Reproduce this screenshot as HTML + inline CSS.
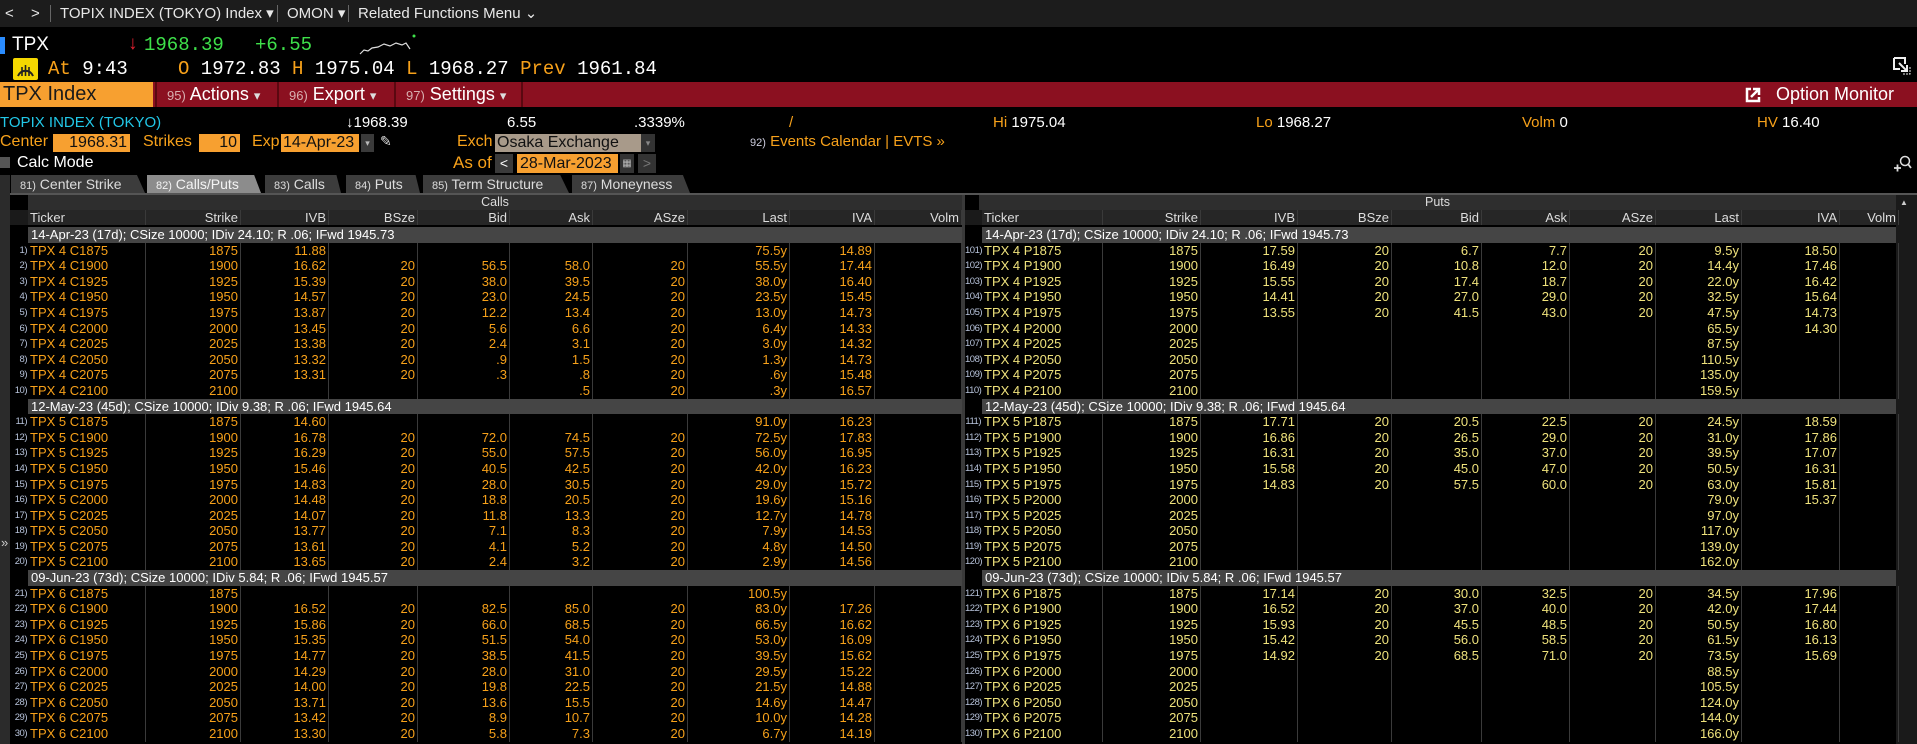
<!DOCTYPE html>
<html><head><meta charset="utf-8"><style>
*{margin:0;padding:0;box-sizing:border-box}
body{width:1917px;height:744px;background:#000;overflow:hidden;position:relative;font-family:"Liberation Sans",sans-serif;color:#fff}
.a{position:absolute;white-space:nowrap}
.o{color:#f7a11a}
.m{font-family:"Liberation Mono",monospace}
#nav{left:0;top:0;width:1917px;height:27px;background:#1c1c1c;font-size:15px;line-height:27px;color:#e8e8e8}
.sep{display:inline-block;width:1px;height:17px;background:#666;vertical-align:middle}
.btn{position:absolute;top:82px;height:25px;background:#8b1020;border-left:2px solid #5a0810;color:#fff;font-size:18px;line-height:25px;padding-left:10px}
.btn small{font-size:13px;color:#d8b0b0}
.box{position:absolute;height:18px;background:#f7a030;color:#111;font-size:16px;line-height:18px}
.tab{position:absolute;top:175px;height:18px;background:#3c3c3c;color:#ddd;font-size:14px;line-height:18px;padding-left:9px;clip-path:polygon(0 0,94% 0,100% 100%,0 100%)}
.tab small{font-size:11px}
.tb{position:absolute}
.r,.h{display:grid;height:15.6px;line-height:15.6px;font-size:13px}
#L .r,#L .h,#LH{grid-template-columns:18px 118px 95px 88px 89px 92px 83px 95px 102px 85px 87px}
#R .r,#R .h,#RH{grid-template-columns:17px 121px 98px 97px 94px 90px 88px 86px 86px 98px 59px}
.r>*,.h>*{text-align:right;padding-right:2px;border-right:1px solid #3a3a3a;overflow:hidden}
.r>b,.h>b{text-align:left;padding-left:2px;font-weight:normal}
.r>i{font-style:normal;font-size:9.5px;color:#b8c4dc;border:none;padding-right:1px;letter-spacing:-0.5px}
.h{background:#262626;color:#ddd;height:15px;line-height:15px}
.h>i{background:#1a1a1a;border:none}
#L .r{color:#f7a11a}
#R .r{color:#efe27c}
.g{height:15.6px;line-height:15.6px;font-size:13px;display:flex}
.g i{width:18px;flex:none}
#R .g i{width:17px}
.g span{flex:1;background:#454545;color:#fff;padding-left:3px}
.band{height:15px;line-height:15px;background:#2e2e2e;color:#ddd;font-size:12.5px;text-align:center;margin-left:18px}
</style></head><body>

<div class="a" id="nav"><span style="position:absolute;left:5px">&lt;</span><span style="position:absolute;left:31px">&gt;</span><span class="sep" style="position:absolute;left:50px;top:5px"></span><span style="position:absolute;left:60px">TOPIX INDEX (TOKYO) Index ▾</span><span class="sep" style="position:absolute;left:277px;top:5px"></span><span style="position:absolute;left:287px">OMON ▾</span><span class="sep" style="position:absolute;left:348px;top:5px"></span><span style="position:absolute;left:358px">Related Functions Menu ⌄</span></div>

<div class="a" style="left:0;top:37px;width:5px;height:17px;background:#2a8cff"></div>
<div class="a m" style="left:12px;top:34px;font-size:19px;font-family:'Liberation Sans',sans-serif">TPX</div>
<div class="a" style="left:128px;top:33px;font-size:19px;color:#e02030">↓</div>
<div class="a m" style="left:144px;top:34px;font-size:19px;color:#3ee04a">1968.39</div>
<div class="a m" style="left:255px;top:34px;font-size:19px;color:#3ee04a">+6.55</div>
<svg class="a" style="left:358px;top:32px" width="62" height="24"><polyline points="2,22 6,18 10,19 14,16 20,15 26,12 32,14 38,11 44,13 48,11 52,17" fill="none" stroke="#ddd" stroke-width="1.2"/><circle cx="56" cy="4" r="1.5" fill="#3ee04a"/></svg>

<div class="a" style="left:13px;top:58px;width:25px;height:22px;background:#f5d800;border-radius:2px"><svg width="25" height="22"><path d="M5 18 A8 8 0 0 1 20 18" fill="none" stroke="#222" stroke-width="2"/><path d="M9 9v9M12.5 7v11M16 9v9" stroke="#222" stroke-width="1.6"/></svg></div>
<div class="a m" style="left:48px;top:58px;font-size:19px"><span class="o">At</span> 9:43</div>
<div class="a m" style="left:178px;top:58px;font-size:19px"><span class="o">O</span> 1972.83 <span class="o">H</span> 1975.04 <span class="o">L</span> 1968.27 <span class="o">Prev</span> 1961.84</div>
<svg class="a" style="left:1892px;top:56px" width="20" height="20"><path d="M2 2h11v6M2 2v11h6" fill="none" stroke="#eee" stroke-width="2"/><path d="M7 7l8 8M15 9v6h-6" fill="none" stroke="#eee" stroke-width="2"/><path d="M11 18h7v-7" fill="none" stroke="#eee" stroke-width="1" stroke-dasharray="2,1"/></svg>

<div class="a" style="left:0;top:82px;width:1917px;height:25px;background:#8b1020"></div>
<div class="box" style="left:0;top:82px;width:153px;height:25px;font-size:20px;line-height:25px;padding-left:3px;color:#1a1a1a">TPX Index</div>
<div class="btn" style="left:155px;width:120px"><small>95)</small> Actions <small style="color:#ddd">▾</small></div>
<div class="btn" style="left:277px;width:115px"><small>96)</small> Export <small style="color:#ddd">▾</small></div>
<div class="btn" style="left:394px;width:129px;border-right:2px solid #5a0810"><small>97)</small> Settings <small style="color:#ddd">▾</small></div>
<svg class="a" style="left:1744px;top:86px" width="18" height="18"><path d="M7 3H3v12h12v-4" fill="none" stroke="#fff" stroke-width="2.5"/><path d="M7 11l7-7M9 3h6v6" fill="none" stroke="#fff" stroke-width="2.5"/></svg>
<div class="a" style="left:1776px;top:83px;font-size:18px;line-height:23px">Option Monitor</div>

<div class="a" style="left:0;top:114px;font-size:15px;color:#22c8e8">TOPIX INDEX (TOKYO)</div>
<div class="a" style="left:346px;top:114px;font-size:15px">↓1968.39</div>
<div class="a" style="left:507px;top:114px;font-size:15px">6.55</div>
<div class="a" style="left:634px;top:114px;font-size:15px">.3339%</div>
<div class="a o" style="left:789px;top:114px;font-size:15px">/</div>
<div class="a" style="left:993px;top:114px;font-size:15px"><span class="o">Hi</span> 1975.04</div>
<div class="a" style="left:1256px;top:114px;font-size:15px"><span class="o">Lo</span> 1968.27</div>
<div class="a" style="left:1522px;top:114px;font-size:15px"><span class="o">Volm</span> 0</div>
<div class="a" style="left:1757px;top:114px;font-size:15px"><span class="o">HV</span> 16.40</div>

<div class="a o" style="left:0;top:133px;font-size:16px">Center</div>
<div class="box" style="left:53px;top:134px;width:77px;text-align:right;padding-right:3px">1968.31</div>
<div class="a o" style="left:143px;top:133px;font-size:16px">Strikes</div>
<div class="box" style="left:199px;top:134px;width:41px;text-align:right;padding-right:3px">10</div>
<div class="a o" style="left:252px;top:133px;font-size:16px">Exp</div>
<div class="box" style="left:281px;top:134px;width:78px;padding-left:2px">14-Apr-23</div>
<div class="a" style="left:361px;top:134px;width:13px;height:18px;background:#3a3a3a;color:#bbb;font-size:9px;text-align:center;line-height:18px">▾</div>
<div class="a" style="left:380px;top:133px;font-size:14px;color:#ddd">✎</div>
<div class="a o" style="left:457px;top:133px;font-size:16px">Exch</div>
<div class="box" style="left:495px;top:134px;width:146px;background:#a89a8a;padding-left:2px">Osaka Exchange</div>
<div class="a" style="left:641px;top:134px;width:14px;height:18px;background:#333;color:#888;font-size:9px;text-align:center;line-height:18px">▾</div>
<div class="a o" style="left:750px;top:133px;font-size:15px"><span style="font-size:11px;color:#ccd">92)</span> Events Calendar | EVTS »</div>

<div class="a" style="left:0;top:157px;width:10px;height:11px;background:#555"></div>
<div class="a" style="left:17px;top:154px;font-size:16px">Calc Mode</div>
<div class="a o" style="left:453px;top:153px;font-size:17px">As of</div>
<div class="a" style="left:495px;top:154px;width:18px;height:19px;background:#3a3a3a;text-align:center;font-size:14px;line-height:19px">&lt;</div>
<div class="box" style="left:517px;top:154px;width:101px;height:19px;line-height:19px;padding-left:3px">28-Mar-2023</div>
<div class="a" style="left:620px;top:154px;width:14px;height:19px;background:#333;color:#bbb;font-size:10px;text-align:center;line-height:19px">▦</div>
<div class="a" style="left:638px;top:154px;width:18px;height:19px;background:#333;color:#777;text-align:center;font-size:14px;line-height:19px">&gt;</div>
<svg class="a" style="left:1892px;top:154px" width="20" height="20"><circle cx="13" cy="7" r="4.5" fill="none" stroke="#ddd" stroke-width="1.5"/><path d="M16 10l3 4M2 14h7M5.5 10.5v7" stroke="#ddd" stroke-width="1.8"/></svg>

<div class="a" style="left:0;top:175px;width:10px;height:569px;background:#2b2b2b"></div>
<div class="a" style="left:1px;top:535px;font-size:13px;color:#ccc">»</div>
<div class="tab" style="left:11px;width:134px"><small>81)</small> Center Strike</div>
<div class="tab" style="left:147px;width:114px;background:#8c8c8c;color:#f4f4f4"><small>82)</small> Calls/Puts</div>
<div class="tab" style="left:265px;width:76px"><small>83)</small> Calls</div>
<div class="tab" style="left:346px;width:74px"><small>84)</small> Puts</div>
<div class="tab" style="left:423px;width:146px"><small>85)</small> Term Structure</div>
<div class="tab" style="left:572px;width:118px"><small>87)</small> Moneyness</div>
<div class="a" style="left:10px;top:193px;width:1907px;height:2px;background:#555"></div>
<div class="a" style="left:1896px;top:195px;width:21px;height:549px;background:#1a1a1a"></div>
<div class="a" style="left:1900px;top:198px;font-size:8px;color:#ccc">▲</div>
<div class="a" style="left:962px;top:195px;width:3px;height:549px;background:#3a3a3a"></div>

<div class="tb" id="L" style="left:10px;top:195px;width:952px">
<div class="band">Calls</div>
<div class="h"><i></i><b>Ticker</b><s>Strike</s><s>IVB</s><s>BSze</s><s>Bid</s><s>Ask</s><s>ASze</s><s>Last</s><s>IVA</s><s>Volm</s></div>
<div style="height:2px"></div>
<div class="g"><i></i><span>14-Apr-23 (17d); CSize 10000; IDiv 24.10; R .06; IFwd 1945.73</span></div>
<div class="r"><i>1)</i><b>TPX 4 C1875</b><s>1875</s><s>11.88</s><s></s><s></s><s></s><s></s><s>75.5y</s><s>14.89</s><s></s></div>
<div class="r"><i>2)</i><b>TPX 4 C1900</b><s>1900</s><s>16.62</s><s>20</s><s>56.5</s><s>58.0</s><s>20</s><s>55.5y</s><s>17.44</s><s></s></div>
<div class="r"><i>3)</i><b>TPX 4 C1925</b><s>1925</s><s>15.39</s><s>20</s><s>38.0</s><s>39.5</s><s>20</s><s>38.0y</s><s>16.40</s><s></s></div>
<div class="r"><i>4)</i><b>TPX 4 C1950</b><s>1950</s><s>14.57</s><s>20</s><s>23.0</s><s>24.5</s><s>20</s><s>23.5y</s><s>15.45</s><s></s></div>
<div class="r"><i>5)</i><b>TPX 4 C1975</b><s>1975</s><s>13.87</s><s>20</s><s>12.2</s><s>13.4</s><s>20</s><s>13.0y</s><s>14.73</s><s></s></div>
<div class="r"><i>6)</i><b>TPX 4 C2000</b><s>2000</s><s>13.45</s><s>20</s><s>5.6</s><s>6.6</s><s>20</s><s>6.4y</s><s>14.33</s><s></s></div>
<div class="r"><i>7)</i><b>TPX 4 C2025</b><s>2025</s><s>13.38</s><s>20</s><s>2.4</s><s>3.1</s><s>20</s><s>3.0y</s><s>14.32</s><s></s></div>
<div class="r"><i>8)</i><b>TPX 4 C2050</b><s>2050</s><s>13.32</s><s>20</s><s>.9</s><s>1.5</s><s>20</s><s>1.3y</s><s>14.73</s><s></s></div>
<div class="r"><i>9)</i><b>TPX 4 C2075</b><s>2075</s><s>13.31</s><s>20</s><s>.3</s><s>.8</s><s>20</s><s>.6y</s><s>15.48</s><s></s></div>
<div class="r"><i>10)</i><b>TPX 4 C2100</b><s>2100</s><s></s><s></s><s></s><s>.5</s><s>20</s><s>.3y</s><s>16.57</s><s></s></div>
<div class="g"><i></i><span>12-May-23 (45d); CSize 10000; IDiv 9.38; R .06; IFwd 1945.64</span></div>
<div class="r"><i>11)</i><b>TPX 5 C1875</b><s>1875</s><s>14.60</s><s></s><s></s><s></s><s></s><s>91.0y</s><s>16.23</s><s></s></div>
<div class="r"><i>12)</i><b>TPX 5 C1900</b><s>1900</s><s>16.78</s><s>20</s><s>72.0</s><s>74.5</s><s>20</s><s>72.5y</s><s>17.83</s><s></s></div>
<div class="r"><i>13)</i><b>TPX 5 C1925</b><s>1925</s><s>16.29</s><s>20</s><s>55.0</s><s>57.5</s><s>20</s><s>56.0y</s><s>16.95</s><s></s></div>
<div class="r"><i>14)</i><b>TPX 5 C1950</b><s>1950</s><s>15.46</s><s>20</s><s>40.5</s><s>42.5</s><s>20</s><s>42.0y</s><s>16.23</s><s></s></div>
<div class="r"><i>15)</i><b>TPX 5 C1975</b><s>1975</s><s>14.83</s><s>20</s><s>28.0</s><s>30.5</s><s>20</s><s>29.0y</s><s>15.72</s><s></s></div>
<div class="r"><i>16)</i><b>TPX 5 C2000</b><s>2000</s><s>14.48</s><s>20</s><s>18.8</s><s>20.5</s><s>20</s><s>19.6y</s><s>15.16</s><s></s></div>
<div class="r"><i>17)</i><b>TPX 5 C2025</b><s>2025</s><s>14.07</s><s>20</s><s>11.8</s><s>13.3</s><s>20</s><s>12.7y</s><s>14.78</s><s></s></div>
<div class="r"><i>18)</i><b>TPX 5 C2050</b><s>2050</s><s>13.77</s><s>20</s><s>7.1</s><s>8.3</s><s>20</s><s>7.9y</s><s>14.53</s><s></s></div>
<div class="r"><i>19)</i><b>TPX 5 C2075</b><s>2075</s><s>13.61</s><s>20</s><s>4.1</s><s>5.2</s><s>20</s><s>4.8y</s><s>14.50</s><s></s></div>
<div class="r"><i>20)</i><b>TPX 5 C2100</b><s>2100</s><s>13.65</s><s>20</s><s>2.4</s><s>3.2</s><s>20</s><s>2.9y</s><s>14.56</s><s></s></div>
<div class="g"><i></i><span>09-Jun-23 (73d); CSize 10000; IDiv 5.84; R .06; IFwd 1945.57</span></div>
<div class="r"><i>21)</i><b>TPX 6 C1875</b><s>1875</s><s></s><s></s><s></s><s></s><s></s><s>100.5y</s><s></s><s></s></div>
<div class="r"><i>22)</i><b>TPX 6 C1900</b><s>1900</s><s>16.52</s><s>20</s><s>82.5</s><s>85.0</s><s>20</s><s>83.0y</s><s>17.26</s><s></s></div>
<div class="r"><i>23)</i><b>TPX 6 C1925</b><s>1925</s><s>15.86</s><s>20</s><s>66.0</s><s>68.5</s><s>20</s><s>66.5y</s><s>16.62</s><s></s></div>
<div class="r"><i>24)</i><b>TPX 6 C1950</b><s>1950</s><s>15.35</s><s>20</s><s>51.5</s><s>54.0</s><s>20</s><s>53.0y</s><s>16.09</s><s></s></div>
<div class="r"><i>25)</i><b>TPX 6 C1975</b><s>1975</s><s>14.77</s><s>20</s><s>38.5</s><s>41.5</s><s>20</s><s>39.5y</s><s>15.62</s><s></s></div>
<div class="r"><i>26)</i><b>TPX 6 C2000</b><s>2000</s><s>14.29</s><s>20</s><s>28.0</s><s>31.0</s><s>20</s><s>29.5y</s><s>15.22</s><s></s></div>
<div class="r"><i>27)</i><b>TPX 6 C2025</b><s>2025</s><s>14.00</s><s>20</s><s>19.8</s><s>22.5</s><s>20</s><s>21.5y</s><s>14.88</s><s></s></div>
<div class="r"><i>28)</i><b>TPX 6 C2050</b><s>2050</s><s>13.71</s><s>20</s><s>13.6</s><s>15.5</s><s>20</s><s>14.6y</s><s>14.47</s><s></s></div>
<div class="r"><i>29)</i><b>TPX 6 C2075</b><s>2075</s><s>13.42</s><s>20</s><s>8.9</s><s>10.7</s><s>20</s><s>10.0y</s><s>14.28</s><s></s></div>
<div class="r"><i>30)</i><b>TPX 6 C2100</b><s>2100</s><s>13.30</s><s>20</s><s>5.8</s><s>7.3</s><s>20</s><s>6.7y</s><s>14.19</s><s></s></div>
</div>

<div class="tb" id="R" style="left:965px;top:195px;width:931px">
<div class="band" style="margin-left:14px">Puts</div>
<div class="h"><i></i><b>Ticker</b><s>Strike</s><s>IVB</s><s>BSze</s><s>Bid</s><s>Ask</s><s>ASze</s><s>Last</s><s>IVA</s><s>Volm</s></div>
<div style="height:2px"></div>
<div class="g"><i></i><span>14-Apr-23 (17d); CSize 10000; IDiv 24.10; R .06; IFwd 1945.73</span></div>
<div class="r"><i>101)</i><b>TPX 4 P1875</b><s>1875</s><s>17.59</s><s>20</s><s>6.7</s><s>7.7</s><s>20</s><s>9.5y</s><s>18.50</s><s></s></div>
<div class="r"><i>102)</i><b>TPX 4 P1900</b><s>1900</s><s>16.49</s><s>20</s><s>10.8</s><s>12.0</s><s>20</s><s>14.4y</s><s>17.46</s><s></s></div>
<div class="r"><i>103)</i><b>TPX 4 P1925</b><s>1925</s><s>15.55</s><s>20</s><s>17.4</s><s>18.7</s><s>20</s><s>22.0y</s><s>16.42</s><s></s></div>
<div class="r"><i>104)</i><b>TPX 4 P1950</b><s>1950</s><s>14.41</s><s>20</s><s>27.0</s><s>29.0</s><s>20</s><s>32.5y</s><s>15.64</s><s></s></div>
<div class="r"><i>105)</i><b>TPX 4 P1975</b><s>1975</s><s>13.55</s><s>20</s><s>41.5</s><s>43.0</s><s>20</s><s>47.5y</s><s>14.73</s><s></s></div>
<div class="r"><i>106)</i><b>TPX 4 P2000</b><s>2000</s><s></s><s></s><s></s><s></s><s></s><s>65.5y</s><s>14.30</s><s></s></div>
<div class="r"><i>107)</i><b>TPX 4 P2025</b><s>2025</s><s></s><s></s><s></s><s></s><s></s><s>87.5y</s><s></s><s></s></div>
<div class="r"><i>108)</i><b>TPX 4 P2050</b><s>2050</s><s></s><s></s><s></s><s></s><s></s><s>110.5y</s><s></s><s></s></div>
<div class="r"><i>109)</i><b>TPX 4 P2075</b><s>2075</s><s></s><s></s><s></s><s></s><s></s><s>135.0y</s><s></s><s></s></div>
<div class="r"><i>110)</i><b>TPX 4 P2100</b><s>2100</s><s></s><s></s><s></s><s></s><s></s><s>159.5y</s><s></s><s></s></div>
<div class="g"><i></i><span>12-May-23 (45d); CSize 10000; IDiv 9.38; R .06; IFwd 1945.64</span></div>
<div class="r"><i>111)</i><b>TPX 5 P1875</b><s>1875</s><s>17.71</s><s>20</s><s>20.5</s><s>22.5</s><s>20</s><s>24.5y</s><s>18.59</s><s></s></div>
<div class="r"><i>112)</i><b>TPX 5 P1900</b><s>1900</s><s>16.86</s><s>20</s><s>26.5</s><s>29.0</s><s>20</s><s>31.0y</s><s>17.86</s><s></s></div>
<div class="r"><i>113)</i><b>TPX 5 P1925</b><s>1925</s><s>16.31</s><s>20</s><s>35.0</s><s>37.0</s><s>20</s><s>39.5y</s><s>17.07</s><s></s></div>
<div class="r"><i>114)</i><b>TPX 5 P1950</b><s>1950</s><s>15.58</s><s>20</s><s>45.0</s><s>47.0</s><s>20</s><s>50.5y</s><s>16.31</s><s></s></div>
<div class="r"><i>115)</i><b>TPX 5 P1975</b><s>1975</s><s>14.83</s><s>20</s><s>57.5</s><s>60.0</s><s>20</s><s>63.0y</s><s>15.81</s><s></s></div>
<div class="r"><i>116)</i><b>TPX 5 P2000</b><s>2000</s><s></s><s></s><s></s><s></s><s></s><s>79.0y</s><s>15.37</s><s></s></div>
<div class="r"><i>117)</i><b>TPX 5 P2025</b><s>2025</s><s></s><s></s><s></s><s></s><s></s><s>97.0y</s><s></s><s></s></div>
<div class="r"><i>118)</i><b>TPX 5 P2050</b><s>2050</s><s></s><s></s><s></s><s></s><s></s><s>117.0y</s><s></s><s></s></div>
<div class="r"><i>119)</i><b>TPX 5 P2075</b><s>2075</s><s></s><s></s><s></s><s></s><s></s><s>139.0y</s><s></s><s></s></div>
<div class="r"><i>120)</i><b>TPX 5 P2100</b><s>2100</s><s></s><s></s><s></s><s></s><s></s><s>162.0y</s><s></s><s></s></div>
<div class="g"><i></i><span>09-Jun-23 (73d); CSize 10000; IDiv 5.84; R .06; IFwd 1945.57</span></div>
<div class="r"><i>121)</i><b>TPX 6 P1875</b><s>1875</s><s>17.14</s><s>20</s><s>30.0</s><s>32.5</s><s>20</s><s>34.5y</s><s>17.96</s><s></s></div>
<div class="r"><i>122)</i><b>TPX 6 P1900</b><s>1900</s><s>16.52</s><s>20</s><s>37.0</s><s>40.0</s><s>20</s><s>42.0y</s><s>17.44</s><s></s></div>
<div class="r"><i>123)</i><b>TPX 6 P1925</b><s>1925</s><s>15.93</s><s>20</s><s>45.5</s><s>48.5</s><s>20</s><s>50.5y</s><s>16.80</s><s></s></div>
<div class="r"><i>124)</i><b>TPX 6 P1950</b><s>1950</s><s>15.42</s><s>20</s><s>56.0</s><s>58.5</s><s>20</s><s>61.5y</s><s>16.13</s><s></s></div>
<div class="r"><i>125)</i><b>TPX 6 P1975</b><s>1975</s><s>14.92</s><s>20</s><s>68.5</s><s>71.0</s><s>20</s><s>73.5y</s><s>15.69</s><s></s></div>
<div class="r"><i>126)</i><b>TPX 6 P2000</b><s>2000</s><s></s><s></s><s></s><s></s><s></s><s>88.5y</s><s></s><s></s></div>
<div class="r"><i>127)</i><b>TPX 6 P2025</b><s>2025</s><s></s><s></s><s></s><s></s><s></s><s>105.5y</s><s></s><s></s></div>
<div class="r"><i>128)</i><b>TPX 6 P2050</b><s>2050</s><s></s><s></s><s></s><s></s><s></s><s>124.0y</s><s></s><s></s></div>
<div class="r"><i>129)</i><b>TPX 6 P2075</b><s>2075</s><s></s><s></s><s></s><s></s><s></s><s>144.0y</s><s></s><s></s></div>
<div class="r"><i>130)</i><b>TPX 6 P2100</b><s>2100</s><s></s><s></s><s></s><s></s><s></s><s>166.0y</s><s></s><s></s></div>
</div>
<style>s{text-decoration:none}</style>
</body></html>
